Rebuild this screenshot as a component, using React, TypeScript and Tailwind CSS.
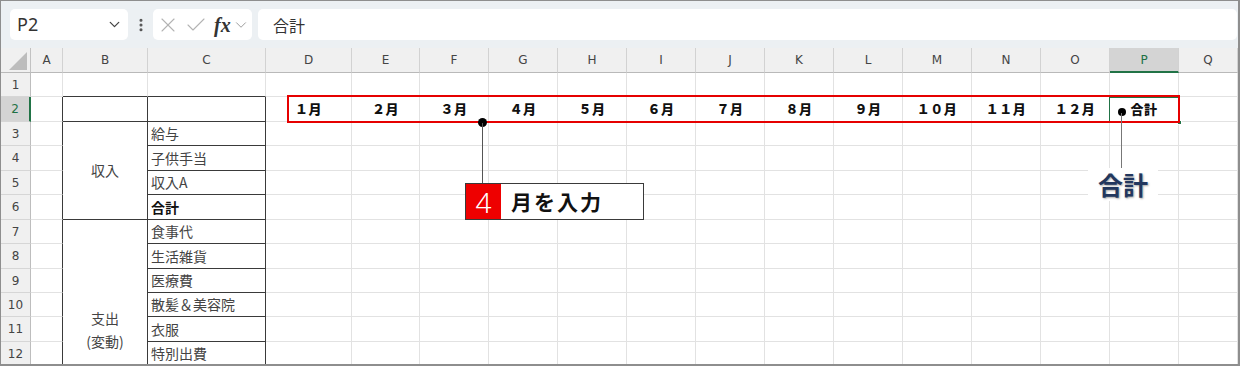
import { ChevronDown, EllipsisVertical, X, Check } from "lucide-react";

const COLS = ["A", "B", "C", "D", "E", "F", "G", "H", "I", "J", "K", "L", "M", "N", "O", "P", "Q"];
const COL_START = [
  "col-start-2", "col-start-3", "col-start-4", "col-start-5", "col-start-6", "col-start-7",
  "col-start-8", "col-start-9", "col-start-10", "col-start-11", "col-start-12", "col-start-13",
  "col-start-14", "col-start-15", "col-start-16", "col-start-17", "col-start-18",
];
const ROW_START = [
  "row-start-2", "row-start-3", "row-start-4", "row-start-5", "row-start-6", "row-start-7",
  "row-start-8", "row-start-9", "row-start-10", "row-start-11", "row-start-12", "row-start-13",
];
const MONTHS = ["１月", "２月", "３月", "４月", "５月", "６月", "７月", "８月", "９月", "１０月", "１１月", "１２月", "合計"];
const ITEMS: Record<number, string> = {
  3: "給与",
  4: "子供手当",
  5: "収入A",
  6: "合計",
  7: "食事代",
  8: "生活雑貨",
  9: "医療費",
  10: "散髪＆美容院",
  11: "衣服",
  12: "特別出費",
};

const jp = { fontFamily: '"Noto Sans CJK JP", "Noto Sans", sans-serif' };
const hdr = { fontFamily: '"DejaVu Sans", "Noto Sans", sans-serif' };

function Cell({ r, c }: { r: number; c: number }) {
  // merged cells in column B
  if (c === 1 && ((r >= 4 && r <= 6) || r >= 8)) return null;

  const inTable = (c === 1 || c === 2) && r >= 2;
  const darkRight = (c === 0 && r >= 2) || inTable;
  const darkBottom = (c === 1 || c === 2) && r >= 1;

  let span = "";
  let content: React.ReactNode = null;
  let inner = "";

  if (c === 1 && r === 3) {
    span = "row-span-4";
    inner = "justify-center";
    content = <span className="text-[14px] text-[#444]">収入</span>;
  } else if (c === 1 && r === 7) {
    span = "row-span-6";
    inner = "flex-col justify-end items-center pb-[12px] leading-[23px]";
    content = (
      <>
        <span className="text-[14px] text-[#444]">支出</span>
        <span className="text-[14px] text-[#444]">(変動)</span>
      </>
    );
  } else if (c === 2 && ITEMS[r]) {
    inner = "pl-[3px]";
    content = (
      <span className={r === 6 ? "text-[14px] font-bold text-[#111]" : "text-[14px] text-[#444]"}>{ITEMS[r]}</span>
    );
  } else if (r === 2 && c >= 3 && c <= 15) {
    inner = "justify-center";
    content = <span className="text-[13px] font-black text-[#111] tracking-[0.5px]">{MONTHS[c - 3]}</span>;
  }

  return (
    <div
      style={jp}
      className={`${COL_START[c]} ${ROW_START[r - 1]} ${span} flex items-center overflow-hidden whitespace-nowrap border-r border-b ${
        darkRight ? "border-r-[#3a3a3a]" : "border-r-[#e2e2e2]"
      } ${darkBottom ? "border-b-[#3a3a3a]" : "border-b-[#e2e2e2]"} ${inner}`}
    >
      {content}
    </div>
  );
}

export default function App() {
  const rows = Array.from({ length: 12 }, (_, i) => i + 1);
  return (
    <div className="w-[1240px] h-[366px] overflow-hidden bg-white border-l border-t border-r-2 border-b-2 border-[#8e8e8e]">
      {/* formula bar */}
      <div className="h-[47px] bg-[#ecf0f3] flex items-start pt-[8px] pl-[9px] pr-[1px]">
        <div className="w-[118px] h-[31px] bg-white rounded-[5px] flex items-center justify-between pl-[7px] pr-[5px]">
          <span className="text-[18px] text-[#333]" style={{ fontFamily: '"Noto Sans", sans-serif' }}>
            P2
          </span>
          <ChevronDown size={17} strokeWidth={1.8} className="text-[#444]" />
        </div>
        <div className="w-[25px] h-[31px] flex items-center justify-center">
          <EllipsisVertical size={16} strokeWidth={2.6} className="text-[#555]" />
        </div>
        <div className="w-[99px] h-[31px] bg-white rounded-[5px] flex items-center pl-[3px]">
          <X size={24} strokeWidth={1.1} className="text-[#b3b3b3]" />
          <Check size={24} strokeWidth={1.1} className="text-[#b3b3b3] ml-[4px]" />
          <span
            className="ml-[6px] text-[20px] font-bold italic text-[#333] leading-none"
            style={{ fontFamily: '"Liberation Serif", serif' }}
          >
            fx
          </span>
          <ChevronDown size={18} strokeWidth={1.3} className="text-[#9a9a9a] ml-[1px]" />
        </div>
        <div className="flex-1 ml-[6px] h-[31px] bg-white rounded-[5px] flex items-center pl-[15px]">
          <span className="text-[16px] text-[#333]" style={jp}>
            合計
          </span>
        </div>
      </div>

      {/* sheet */}
      <div className="relative">
        <div className="grid grid-cols-[30px_32px_85px_118px_86px_68px_69px_69px_69px_69px_69px_69px_69px_69px_69px_69px_69px_1fr] grid-rows-[25px_24px_25px_24px_25px_24px_25px_24px_25px_24px_24px_25px_24px]">
          {/* corner */}
          <div className="col-start-1 row-start-1 bg-[#f0f0f0] border-r border-b border-r-[#c2c2c2] border-b-[#b9b9b9] flex items-end justify-end pr-[3px] pb-[2px]">
            <svg width="18" height="18" viewBox="0 0 18 18">
              <polygon points="18,0 18,18 0,18" fill="#bdbdbd" />
            </svg>
          </div>
          {/* column headers */}
          {COLS.map((l, i) => (
            <div
              key={l}
              style={hdr}
              className={`${COL_START[i]} row-start-1 flex items-center justify-center text-[12px] border-r border-r-[#d2d2d2] ${
                l === "P"
                  ? "bg-[#d4d4d4] text-[#1e7145] border-b-2 border-b-[#217346]"
                  : "bg-[#f0f0f0] text-[#444] border-b border-b-[#b9b9b9]"
              }`}
            >
              {l}
            </div>
          ))}
          {/* row headers */}
          {rows.map((r) => (
            <div
              key={`rh-${r}`}
              style={hdr}
              className={`col-start-1 ${ROW_START[r - 1]} flex items-center justify-center text-[12px] border-b border-b-[#d6d6d6] ${
                r === 2
                  ? "bg-[#d4d4d4] text-[#1e7145] border-r-2 border-r-[#217346]"
                  : "bg-[#f0f0f0] text-[#444] border-r border-r-[#bdbdbd]"
              }`}
            >
              {r}
            </div>
          ))}
          {/* cells */}
          {rows.map((r) => COLS.map((_, c) => <Cell key={`${r}-${c}`} r={r} c={c} />))}
        </div>

        {/* selection P2 */}
        <div className="absolute left-[1108px] top-[49px] w-[70px] h-[26px] border border-[#217346]" />
        <div className="absolute left-[1176px] top-[72px] w-[5px] h-[5px] bg-[#217346] border border-white" />

        {/* red frame around months */}
        <div className="absolute left-[286px] top-[47px] w-[893px] h-[28px] border-2 border-[#e60000]" />

        {/* callout 4 */}
        <div className="absolute left-[477px] top-[70px] w-[9px] h-[9px] rounded-full bg-black" />
        <div className="absolute left-[481px] top-[75px] w-px h-[61px] bg-[#555]" />
        <div className="absolute left-[464px] top-[135px] flex h-[37px] border border-[#3a3a3a]" style={jp}>
          <div className="w-[35px] bg-[#ee0000] flex items-center justify-center">
            <span className="text-[28px] font-light text-white leading-none" style={{ fontFamily: '"Noto Sans", sans-serif' }}>
              4
            </span>
          </div>
          <div className="w-[142px] bg-white flex items-center pl-[10px]">
            <span className="text-[21px] font-bold text-[#111] tracking-[2px]">月を入力</span>
          </div>
        </div>

        {/* callout 合計 */}
        <div className="absolute left-[1117px] top-[60px] w-[8px] h-[8px] rounded-full bg-black" />
        <div className="absolute left-[1120px] top-[65px] w-px h-[56px] bg-[#777]" />
        <div className="absolute left-[1087px] top-[120px] w-[70px] h-[33px] bg-white flex items-center justify-center" style={jp}>
          <span
            className="text-[25px] font-bold text-[#22375e] leading-none"
            style={{ textShadow: "1px 1px 2px rgba(0,0,0,0.35)" }}
          >
            合計
          </span>
        </div>
      </div>
    </div>
  );
}
